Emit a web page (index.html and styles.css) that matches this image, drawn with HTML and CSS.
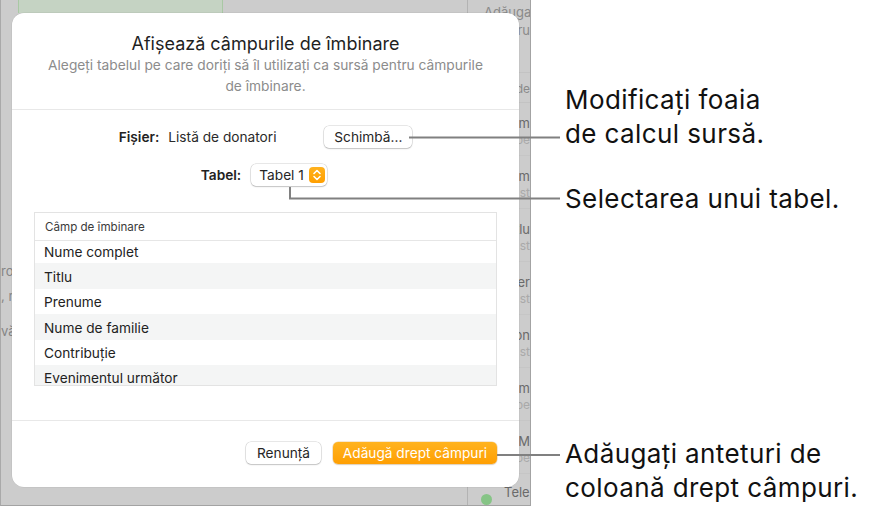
FILE: index.html
```html
<!DOCTYPE html>
<html lang="ro">
<head>
<meta charset="utf-8">
<title>Afișează câmpurile de îmbinare</title>
<link rel="stylesheet" href="styles.css">
</head>
<body>
<div class="figure">
  <div class="app">
    <div class="app-main">
      <div class="app-top"><div class="green-cell"></div></div>
      <div class="doc-text">
        <p class="l1">ro</p>
        <p class="l2">, r</p>
        <p class="l3">vă</p>
      </div>
    </div>
    <aside class="sidebar">
      <div class="sb-intro">Adăuga<br>tru</div>
      <div class="sb-sec">de</div>
      <div class="sb-item"><span class="t">um</span><span class="s">pe</span></div>
      <div class="sb-item"><span class="t">um</span><span class="s">st</span></div>
      <div class="sb-item"><span class="t">tlu</span><span class="s">st</span></div>
      <div class="sb-item"><span class="t">er</span><span class="s">st</span></div>
      <div class="sb-item"><span class="t">on</span><span class="s">st</span></div>
      <div class="sb-item"><span class="t">um</span><span class="s">pe</span></div>
      <div class="sb-item"><span class="t">M</span><span class="s">pe</span></div>
      <div class="sb-tel"><span class="dot"></span><span class="t">Tele</span></div>
    </aside>
  </div>

  <div class="dialog">
    <header class="dlg-head">
      <h1 class="dlg-title">Afișează câmpurile de îmbinare</h1>
      <p class="dlg-sub">Alegeți tabelul pe care doriți să îl utilizați ca sursă pentru câmpurile de îmbinare.</p>
    </header>
    <div class="dlg-body">
      <div class="row file-row">
        <span class="lbl">Fișier:</span>
        <span class="val">Listă de donatori</span>
        <button class="btn change-btn">Schimbă...</button>
      </div>
      <div class="row table-row">
        <span class="lbl">Tabel:</span>
        <div class="popup">
          <span>Tabel 1</span>
          <span class="stepper">
            <svg width="16" height="16" viewBox="0 0 16 16"><path d="M5 6.5 L8 3.5 L11 6.5" fill="none" stroke="#fff" stroke-width="1.6" stroke-linecap="round" stroke-linejoin="round"/><path d="M5 9.5 L8 12.5 L11 9.5" fill="none" stroke="#fff" stroke-width="1.6" stroke-linecap="round" stroke-linejoin="round"/></svg>
          </span>
        </div>
      </div>
      <div class="fields">
        <div class="fields-head">Câmp de îmbinare</div>
        <div class="fields-list">
          <div class="field">Nume complet</div>
          <div class="field alt">Titlu</div>
          <div class="field">Prenume</div>
          <div class="field alt">Nume de familie</div>
          <div class="field">Contribuție</div>
          <div class="field alt">Evenimentul următor</div>
        </div>
      </div>
    </div>
    <footer class="dlg-foot">
      <button class="btn">Renunță</button>
      <button class="btn primary">Adăugă drept câmpuri</button>
    </footer>
  </div>

  <svg class="leaders" width="875" height="513" viewBox="0 0 875 513">
    <path d="M409 137.5 H560" />
    <path d="M290 187 V198.5 H560" />
    <path d="M497 455 H560" />
  </svg>

  <div class="callout c1">Modificați foaia<br>de calcul sursă.</div>
  <div class="callout c2">Selectarea unui tabel.</div>
  <div class="callout c3">Adăugați anteturi de<br>coloană drept câmpuri.</div>
</div>
</body>
</html>
```
FILE: styles.css
```css
* { box-sizing: border-box; }
html, body { margin: 0; padding: 0; background: #fff; }
body { font-family: Inter, Roboto, "Liberation Sans", sans-serif; }

.figure {
  position: relative;
  width: 875px;
  height: 513px;
  overflow: hidden;
}

/* background app window (dimmed) */
.app {
  display: flex;
  width: 531px;
  height: 506px;
  background: #cccccc;
  border-left: 1px solid #a9a9a9;
  border-right: 1px solid #a3a3a3;
  border-bottom: 1px solid #a3a3a3;
  overflow: hidden;
}
.app-main {
  width: 467px;
  display: flex;
  flex-direction: column;
}
.app-top {
  height: 13px;
  padding-left: 17px;
  display: flex;
}
.green-cell {
  width: 205px;
  height: 13px;
  background: #c5d3c3;
  border-left: 1px solid #a9c8a4;
  border-right: 1px solid #a9c8a4;
}
.doc-text {
  padding-top: 250px;
  font-size: 13px;
  color: #858585;
}
.doc-text p { margin: 0; line-height: 16px; }
.doc-text .l2 { margin-top: 9px; }
.doc-text .l3 { margin-top: 19px; }

.sidebar {
  width: 63px;
  border-left: 1px solid #b3b3b3;
  display: flex;
  flex-direction: column;
  font-size: 13px;
  color: #6f6f6f;
  white-space: nowrap;
}
.sidebar > * { flex: none; }
.sb-intro {
  height: 73px;
  padding: 3px 0 0 16px;
  line-height: 18px;
  text-align: right;
  color: #8a8a8a;
  border-bottom: 1px solid #c3c3c3;
}
.sb-sec {
  height: 30px;
  padding: 8px 0 0 0;
  text-align: right;
  font-size: 12px;
  color: #8a8a8a;
  border-bottom: 1px solid #c3c3c3;
}
.sb-item {
  height: 53px;
  padding: 12px 0 0 0;
  display: flex;
  flex-direction: column;
  align-items: flex-end;
  border-bottom: 1px solid #c6c6c6;
}
.sb-item .t { line-height: 16px; color: #6a6a6a; }
.sb-item .s { line-height: 17px; font-size: 12px; color: #a9a9a9; }
.sb-tel {
  display: flex;
  align-items: flex-start;
  padding: 0 0 0 13px;
  height: 40px;
  font-size: 13px;
  color: #6a6a6a;
}
.sb-tel .dot {
  width: 11px; height: 11px; border-radius: 50%;
  background: #86c486;
  margin: 20px 12px 0 0;
}
.sb-tel .t { line-height: 16px; margin-top: 10px; }

/* dialog */
.dialog {
  position: absolute;
  left: 12px;
  top: 13px;
  width: 507px;
  height: 474px;
  background: #fff;
  border-radius: 12px;
  box-shadow: 0 0 0 0.5px rgba(0,0,0,0.08);
  display: flex;
  flex-direction: column;
  color: #262626;
}
.dlg-head {
  padding: 20px 30px 12px;
  text-align: center;
  border-bottom: 1px solid #e8e8e8;
}
.dlg-title {
  margin: 0;
  font-size: 18px;
  font-weight: 400;
  line-height: 21px;
  padding-bottom: 1px;
  color: #1f1f1f;
}
.dlg-sub {
  margin: 0;
  font-size: 13.75px;
  line-height: 21px;
  color: #8c8c8c;
}
.dlg-body {
  height: 311px;
  padding: 16px 22px 0;
  display: flex;
  flex-direction: column;
  border-bottom: 1px solid #e8e8e8;
  font-size: 13.7px;
}
.row {
  display: flex;
  align-items: center;
  justify-content: center;
  height: 22px;
}
.lbl { font-weight: 600; color: #222; }
.file-row .val { margin-left: 9px; width: 109px; color: #2a2a2a; white-space: nowrap; }
.file-row .change-btn { margin-left: 47px; width: 88px; }
.table-row { margin-top: 16px; padding-right: 3px; }
.table-row .popup { margin-left: 10px; }

.btn {
  height: 22px;
  padding: 0 6px;
  font-family: inherit;
  font-size: 13.7px;
  color: #262626;
  background: #fff;
  border: 0;
  border-radius: 5px;
  white-space: nowrap;
  box-shadow: 0 0 0 0.5px rgba(0,0,0,0.18), 0 1px 1.5px rgba(0,0,0,0.16);
}
.popup {
  display: flex;
  align-items: center;
  height: 22px;
  width: 76px;
  padding: 0 2px 0 8px;
  justify-content: space-between;
  background: #fff;
  border-radius: 5px;
  box-shadow: 0 0 0 0.5px rgba(0,0,0,0.18), 0 1px 1.5px rgba(0,0,0,0.16);
  color: #262626;
}
.stepper {
  width: 16px;
  height: 16px;
  border-radius: 4px;
  background: linear-gradient(#ffb21e, #ff9f00);
  display: flex;
}

.fields {
  margin-top: 26px;
  height: 174px;
  border: 1px solid #e3e3e3;
  display: flex;
  flex-direction: column;
  overflow: hidden;
}
.fields-head {
  height: 28px;
  flex: none;
  padding: 2px 0 0 10px;
  font-size: 11.6px;
  line-height: 24px;
  color: #3a3a3a;
  border-bottom: 1.5px solid #e6e6e6;
}
.fields-list {
  margin-top: -3px;
}
.field {
  height: 25.4px;
  padding: 3.5px 0 0 9px;
  line-height: 21.9px;
  color: #222;
}
.field.alt { background: #f4f5f5; }

.dlg-foot {
  flex: 1;
  display: flex;
  justify-content: flex-end;
  align-items: flex-start;
  gap: 12px;
  padding: 21px 22px 0;
}
.dlg-foot .btn:first-child { width: 75px; }
.btn.primary {
  width: 164px;
  color: #fff;
  background: linear-gradient(#ffb31f, #ff9f02);
  box-shadow: 0 0 0 0.5px rgba(200,120,0,0.35), 0 1px 1.5px rgba(0,0,0,0.12);
}

/* annotations */
.leaders {
  position: absolute;
  left: 0;
  top: 0;
  fill: none;
  stroke: #808080;
  stroke-width: 2;
}
.callout {
  position: absolute;
  left: 565px;
  font-size: 26px;
  letter-spacing: 0.4px;
  line-height: 34px;
  color: #111;
  white-space: nowrap;
}
.c1 { top: 83px; }
.c2 { top: 182px; }
.c3 { top: 437px; }
```
